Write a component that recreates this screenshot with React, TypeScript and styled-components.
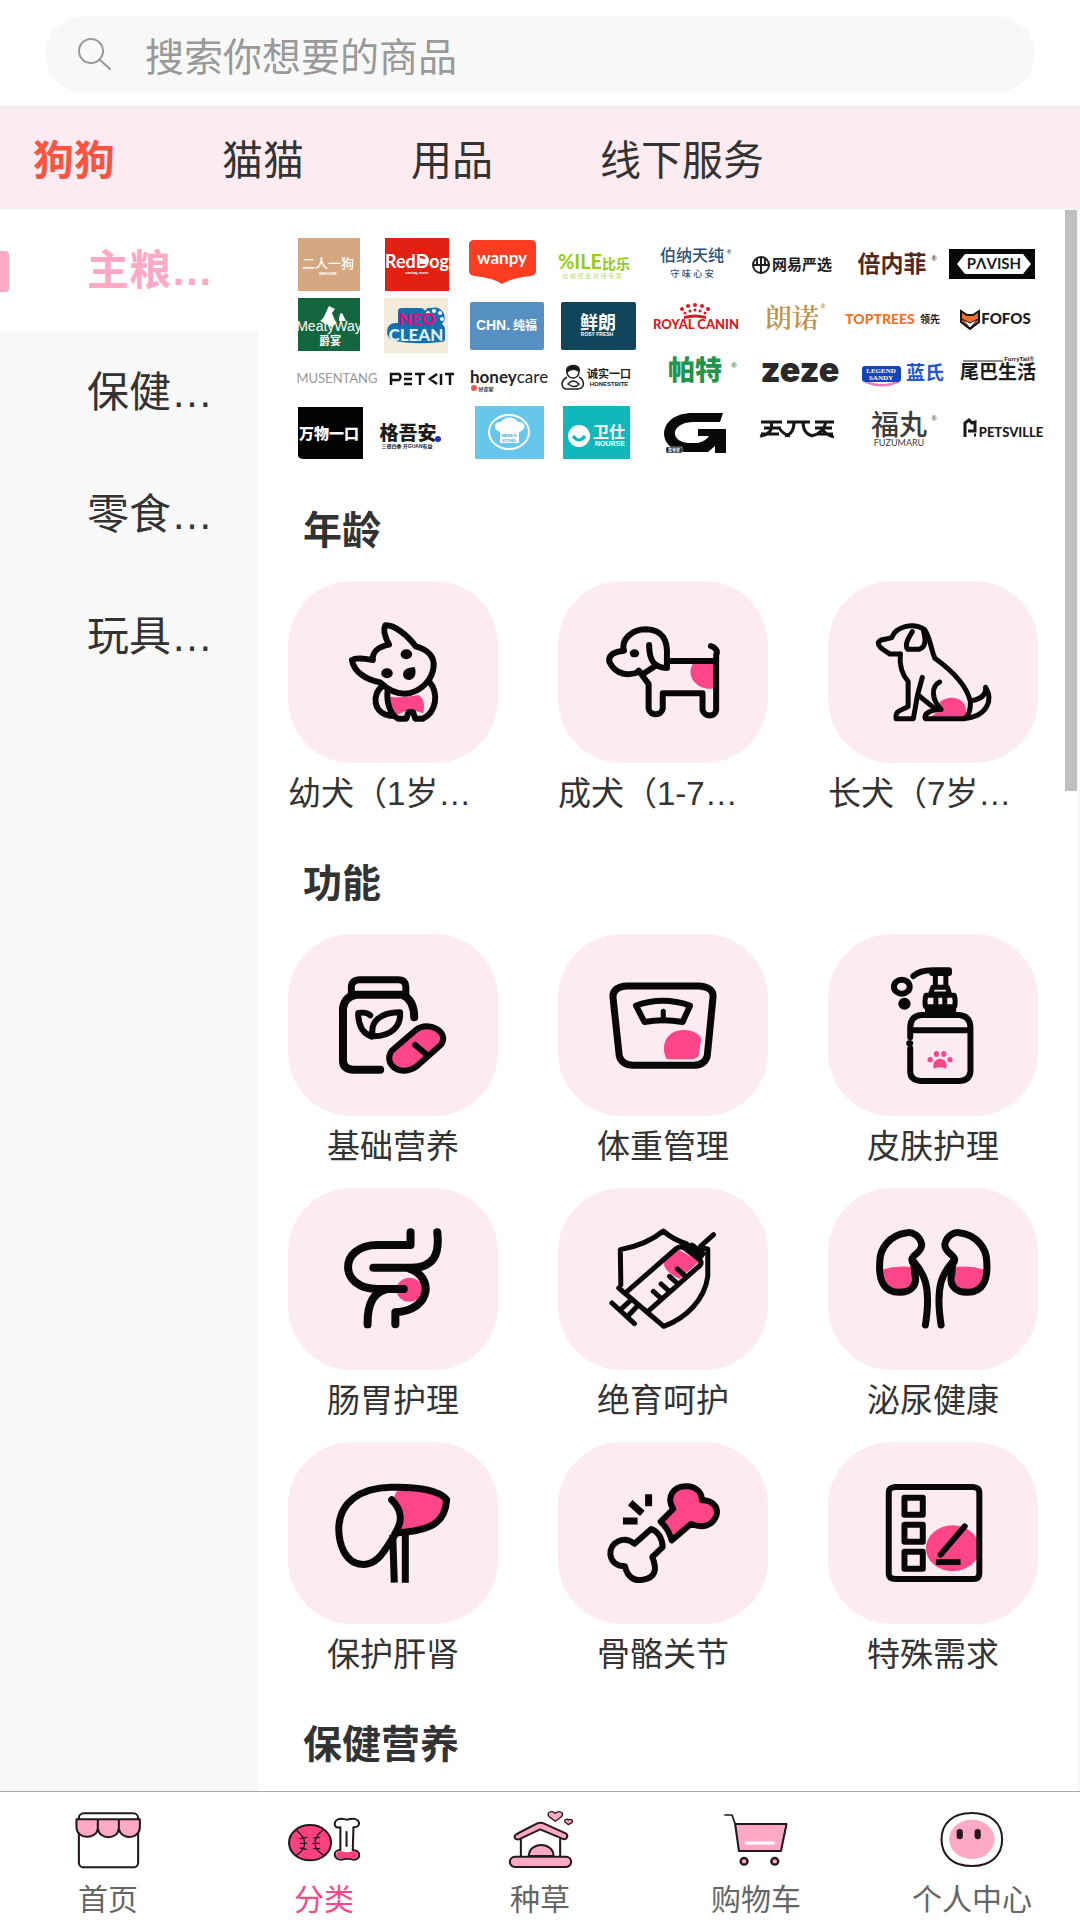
import React from "react";
import styled, { createGlobalStyle } from "styled-components";

const font = `"Liberation Sans", "Noto Sans CJK SC", sans-serif`;
const pink = "#fc4689";
const softPink = "#ffa9c7";
const tint = "#fdebf2";

const GlobalStyle = createGlobalStyle`
  * { box-sizing: border-box; }
  body { margin: 0; background: #fff; color: #333; font-family: ${font}; }
  button, input { font-family: inherit; color: inherit; }
`;

const Page = styled.div`
  display: flex;
  flex-direction: column;
  height: 100vh;
  overflow: hidden;
`;

const SearchHeader = styled.header`
  padding: 16px 45px 13px;
  border-bottom: 3px solid #eeeeee;
`;

const SearchBox = styled.label`
  display: flex;
  align-items: center;
  gap: 32px;
  height: 77px;
  padding: 0 32px;
  border-radius: 40px;
  background: #f8f8f8;
`;

const SearchInput = styled.input`
  flex: 1;
  min-width: 0;
  padding: 6px 0 0;
  border: 0;
  outline: 0;
  background: none;
  font-size: 39px;
  line-height: 56px;
  &::placeholder { color: #999; opacity: 1; }
`;

const TabBar = styled.nav`
  display: flex;
  align-items: center;
  gap: 107px;
  height: 101px;
  padding: 4px 33px 0;
  background: ${tint};
  border-bottom: 2px solid #f5f3f4;
`;

const Tab = styled.button<{ $active?: boolean }>`
  padding: 0;
  border: 0;
  background: none;
  white-space: nowrap;
  font-size: 41px;
  line-height: 56px;
  font-weight: ${(p) => (p.$active ? 700 : 400)};
  color: ${(p) => (p.$active ? "#fd5442" : "#333")};
`;

const Body = styled.div`
  flex: 1;
  min-height: 0;
  display: flex;
`;

const Sidebar = styled.aside`
  flex: none;
  width: 258px;
  background: #f8f8f8;
`;

const SideItem = styled.button<{ $active?: boolean }>`
  display: flex;
  align-items: center;
  width: 100%;
  height: 122px;
  padding: 0 40px 0 0;
  border: 0;
  text-align: left;
  background: ${(p) => (p.$active ? "#fff" : "transparent")};
  color: ${(p) => (p.$active ? softPink : "#333")};
  font-weight: ${(p) => (p.$active ? 700 : 400)};
  font-size: 42px;
  line-height: 60px;
  &::before {
    content: "";
    flex: none;
    width: 9px;
    height: 41px;
    margin-right: 78px;
    border-radius: 0 4px 4px 0;
    background: ${(p) => (p.$active ? softPink : "transparent")};
  }
`;

const Ellipsis = styled.span`
  min-width: 0;
  max-width: 100%;
  overflow: hidden;
  white-space: nowrap;
  text-overflow: ellipsis;
`;

const Content = styled.main`
  flex: 1;
  min-width: 0;
  overflow: hidden;
  padding: 0 27px 0 30px;
`;

const Rail = styled.div`
  flex: none;
  width: 15px;
  border-right: 3px solid #f8f8f8;
`;

const Thumb = styled.div`
  height: 581px;
  max-height: 60%;
  background: #c0c0c0;
`;

const BrandWall = styled.svg`
  display: block;
  width: 100%;
  overflow: visible;
`;

const SectionTitle = styled.h2`
  margin: 0;
  padding: 41px 15px 24px;
  font-size: 39px;
  line-height: 52px;
  font-weight: 700;
`;

const Grid = styled.div`
  display: grid;
  grid-template-columns: repeat(3, minmax(0, 1fr));
  gap: 18px 60px;
`;

const Card = styled.button`
  display: flex;
  flex-direction: column;
  align-items: center;
  gap: 8px;
  padding: 0;
  border: 0;
  background: none;
  font-size: 33px;
  line-height: 46px;
`;

const Tile = styled.span`
  display: block;
  width: 100%;
  height: 182px;
  border-radius: 64px;
  background: ${tint};
`;

const TileArt = styled.svg`
  display: block;
  width: 100%;
  height: 100%;
  fill: none;
  stroke: #080808;
  stroke-linecap: round;
  stroke-linejoin: round;
  & * { vector-effect: non-scaling-stroke; }
  & .fill { fill: ${pink}; stroke: none; }
  & .dot { fill: #080808; stroke: none; }
`;

const BottomNav = styled.nav`
  flex: none;
  display: grid;
  grid-template-columns: repeat(5, 1fr);
  height: 129px;
  border-top: 1px solid #aaa;
  background: #fff;
`;

const NavLink = styled.a<{ $active?: boolean }>`
  display: flex;
  flex-direction: column;
  align-items: center;
  gap: 9px;
  padding-top: 18px;
  text-decoration: none;
  font-size: 30px;
  line-height: 42px;
  white-space: nowrap;
  color: ${(p) => (p.$active ? pink : "#666")};
`;

const NavIcon = styled.svg`
  width: 72px;
  height: 60px;
  fill: none;
  stroke: #241a1c;
  stroke-width: 6;
  stroke-linecap: round;
  stroke-linejoin: round;
`;

type Art = { x: number; y: number; w: number; art: React.ReactNode };

const puppy: Art = { x: 54, y: 303, w: 6, art: (<>
  <path className="fill" d="M248 650Q272 656 302 645C312 652 317 672 312 700L296 692H280L262 704C252 690 248 670 248 650Z" />
  <path d="M247 494C240 474 235 450 240 436C256 434 280 462 298 499C322 508 334 532 332 560C330 595 312 630 285 640C262 645 245 630 230 607C205 600 180 578 176 540C184 532 200 536 216 540C214 515 228 500 247 494Z" />
  <ellipse className="dot" cx="280" cy="523" rx="11" ry="15" /><ellipse className="dot" cx="243" cy="580" rx="11" ry="15" />
  <path className="dot" d="M274 588C272 568 284 562 296 562C300 580 296 598 286 600C280 600 276 596 274 588Z" />
  <path d="M235 617C214 640 214 704 254 708M244 634C242 672 250 704 264 716H280L284 697H293L297 716H312C338 695 342 640 324 605" />
</>) };

const standingDog: Art = { x: 570, y: 303, w: 6, art: (<>
  <path className="fill" d="M830 548H870V625C843 632 822 606 823 572Q824 556 830 548Z" />
  <path d="M726 574C706 590 680 585 668 545C666 522 680 515 696 512C690 480 710 448 738 448C770 450 780 480 778 530V564C758 564 744 550 744 495M724 572L730 584L758 556M730 584L743 612V686C745 708 768 708 770 686V640H846V690C850 712 870 712 872 690V525C876 512 870 502 862 498M783 543H870" />
  <ellipse className="dot" cx="716" cy="520" rx="9" ry="12" />
</>) };

const sittingDog: Art = { x: 1086, y: 303, w: 5, art: (<>
  <path className="fill" d="M1300 690C1290 670 1306 653 1324 653C1346 656 1352 680 1350 710H1282Z" />
  <path d="M1224 522H1204C1196 512 1182 505 1182 488C1184 476 1196 480 1208 472C1215 440 1248 426 1270 448C1280 465 1282 505 1290 535C1330 580 1352 625 1358 665C1358 692 1355 710 1345 716H1272C1268 702 1280 690 1302 688C1284 660 1282 620 1299 606" />
  <path d="M1224 522C1222 560 1228 585 1239 604V680C1225 692 1214 690 1216 716H1249L1257 645L1266 592M1258 645L1290 686M1247 455C1238 478 1232 495 1238 508H1260C1275 500 1272 475 1268 450M1361 662C1380 656 1388 642 1387 622C1402 660 1390 710 1345 716" />
</>) };

const pills: Art = { x: 54, y: 282, w: 8, art: (<>
  <path d="M230 689H178Q159 686 159 662V504Q163 468 185 464H272Q295 480 295 532" />
  <path strokeWidth="7" d="M175 462V438Q177 420 190 419H265Q279 420 279 440V464" />
  <path strokeWidth="6" d="M214 590C192 578 188 545 188 519C200 516 207 519 211 526M216 589C210 545 230 517 268 517C270 560 250 590 216 589Z" />
  <path fill={pink} strokeWidth="6" d="M252 632L298 570C322 540 364 576 346 614L299 680C270 712 234 674 252 632Z" />
  <path strokeWidth="6" d="M297 615L318 643" />
</>) };

const scale: Art = { x: 570, y: 282, w: 7, art: (<>
  <path className="fill" d="M778 658C764 620 776 570 810 570C832 570 846 588 843 604L838 650L828 658Z" />
  <path d="M700 438H840Q868 442 866 472L855 648Q850 676 828 676H714Q692 675 687 648L675 472Q674 442 700 438Z" />
  <path strokeWidth="6" d="M719 497Q770 468 822 497L808 546Q770 535 735 546Z" /><path strokeWidth="5" d="M771 514V542" />
</>) };

const pump: Art = { x: 1086, y: 282, w: 5, art: (<>
  <ellipse strokeWidth="6" cx="1227" cy="440" rx="15" ry="21" /><ellipse strokeWidth="6" cx="1232" cy="491" rx="6" ry="9" />
  <path strokeWidth="6" d="M1249 408Q1262 391 1285 391H1317V399H1285" />
  <path d="M1291 400V440M1311 400V440M1286 442H1314Q1316 450 1318 462H1282Q1284 450 1286 442ZM1273 466H1327Q1330 480 1328 500H1272Q1270 480 1273 466ZM1292 468V498M1309 468V498M1276 504V522M1326 504V522M1276 512H1326" />
  <path strokeWidth="6" d="M1243 592V562Q1244 526 1265 525H1337Q1357 528 1358 562V695Q1356 723 1336 723H1264Q1243 720 1243 695V625M1246 571H1356M1241 610H1243" />
  <path className="fill" d="M1288 686C1284 665 1294 656 1300 656C1308 656 1316 668 1311 686Q1300 678 1288 686Z" />
  <ellipse className="fill" cx="1281" cy="659" rx="5" ry="8" /><ellipse className="fill" cx="1293" cy="642" rx="5" ry="9" />
  <ellipse className="fill" cx="1307" cy="642" rx="5" ry="9" /><ellipse className="fill" cx="1319" cy="659" rx="5" ry="8" />
</>) };

const stomach: Art = { x: 54, y: 55, w: 8, art: (<>
  <ellipse className="fill" cx="286" cy="360" rx="25" ry="36" />
  <path d="M288 188V226H225C150 226 150 358 225 358H275M339 188C344 254 332 294 290 294H217M285 296C332 320 330 420 259 428V464M240 360Q205 375 206 464" />
</>) };

const vaccine: Art = { x: 570, y: 55, w: 5, art: (<>
  <path className="fill" d="M798 238L840 275L802 328C780 312 764 285 776 264Z" />
  <path d="M690 346L689 240Q740 225 771 184Q790 210 815 222M848 236L856 238V320C850 390 815 445 772 470L742 430M700 368L795 238Q804 226 812 236L842 272Q846 284 836 294L744 422M686 355L742 430M710 390L692 416M722 408L704 438M673 400L716 462M752 365L766 385M767 343L781 363M783 320L797 340M798 298L812 318" />
  <path strokeWidth="6" d="M818 228L843 258M826 228L846 252" /><path d="M842 230L867 195" />
</>) };

const kidney = (<>
  <path className="fill" d="M1188 300Q1220 285 1250 293L1253 330Q1246 364 1222 366Q1190 358 1188 300Z" />
  <path d="M1250 285C1236 255 1264 258 1265 225C1262 196 1246 187 1238 189C1202 195 1185 240 1185 275C1182 330 1192 368 1222 368C1246 368 1257 345 1252 315ZM1250 276C1268 310 1284 345 1272 466" />
</>);
const kidneys: Art = { x: 1086, y: 55, w: 7, art: (<>{kidney}<g transform="translate(2574 0) scale(-1 1)">{kidney}</g></>) };

const liver: Art = { x: 54, y: 67, w: 7, art: (<>
  <path className="fill" d="M262 213C300 208 345 222 354 245C350 302 325 325 266 336C276 292 268 262 254 240Z" />
  <path d="M260 342C244 372 230 438 195 434C162 430 150 370 151 320C154 250 190 205 250 203C300 200 344 212 357 240C354 310 328 332 262 340M252 240C274 275 272 308 258 342" />
  <path strokeLinecap="butt" d="M254 345L257 489M278 340V489" />
</>) };

const bones: Art = { x: 570, y: 67, w: 6, art: (<>
  <path fill={pink} d="M787 362Q782 330 766 306L790 268C776 232 790 200 815 200C835 200 845 220 845 242C866 242 876 262 873 285C866 320 846 326 824 313Z" />
  <path d="M748 328L716 372C695 345 668 370 670 405C672 430 685 440 698 440C702 470 715 486 732 480C756 474 760 450 750 412L770 382Q768 340 748 328Z" />
  <path strokeLinecap="butt" strokeWidth="7" d="M743 224V260M708 249L731 281M694 304H722" />
</>) };

const checklist: Art = { x: 1086, y: 67, w: 6, art: (<>
  <ellipse className="fill" cx="1324" cy="386" rx="51" ry="69" />
  <path d="M1214 202H1363Q1375 204 1375 218V462Q1375 478 1363 478H1214Q1202 476 1202 462V218Q1202 204 1214 202Z" />
  <path strokeWidth="6" d="M1232 234H1267V285H1232ZM1232 315H1267V366H1232ZM1232 396H1267V447H1232Z" />
  <path d="M1347 320L1301 405" /><path strokeLinecap="butt" d="M1292 427H1339" />
</>) };

const sections: { title: string; cards: { label: string; icon: Art }[] }[] = [
  { title: "年龄", cards: [
    { label: "幼犬（1岁以下）", icon: puppy },
    { label: "成犬（1-7岁）", icon: standingDog },
    { label: "长犬（7岁以上）", icon: sittingDog },
  ] },
  { title: "功能", cards: [
    { label: "基础营养", icon: pills },
    { label: "体重管理", icon: scale },
    { label: "皮肤护理", icon: pump },
    { label: "肠胃护理", icon: stomach },
    { label: "绝育呵护", icon: vaccine },
    { label: "泌尿健康", icon: kidneys },
    { label: "保护肝肾", icon: liver },
    { label: "骨骼关节", icon: bones },
    { label: "特殊需求", icon: checklist },
  ] },
  { title: "保健营养", cards: [] },
];

const navItems = [
  { label: "首页", x: 209, art: (<>
    <rect x="229" y="100" width="172" height="162" rx="14" fill="#fff" />
    <path fill={softPink} d="M222 118H406V142C404 180 350 180 345 146C342 180 288 180 284 146C280 180 222 178 222 142ZM284 118V148M345 118V148" />
  </>) },
  { label: "分类", x: 836, active: true, art: (<>
    <ellipse cx="900" cy="188" rx="61" ry="53" fill="#ff4081" />
    <path strokeWidth="4" d="M862 152C892 176 892 206 860 226M938 150C904 176 908 206 940 226M872 176L890 172M872 190H890M872 204L890 208M928 172L912 174M928 190H908M928 206L910 206" />
    <path fill="#fff" d="M988 142C966 148 966 118 988 116C1000 116 1004 119 1008 119C1014 116 1020 116 1028 116C1048 122 1046 142 1026 142L1024 210C1048 212 1048 236 1028 239Q1008 234 990 239C966 236 966 210 988 210Z" />
    <path fill="#ff4081" stroke="none" d="M988 213Q1006 220 1026 213C1044 216 1042 234 1028 236Q1008 232 990 236C970 234 972 216 988 213Z" />
    <path d="M1006 156V198" />
  </>) },
  { label: "种草", x: 1463, art: (<>
    <path d="M1512 178V228M1626 178V228" />
    <path fill={softPink} d="M1535 228C1536 184 1606 184 1607 228Z" />
    <path fill={softPink} d="M1500 162L1558 131Q1568 126 1578 130L1642 160C1652 168 1644 182 1632 176L1568 148L1506 178C1492 180 1490 168 1500 162Z" />
    <rect x="1480" y="230" width="178" height="31" rx="15" fill={softPink} />
    <path strokeWidth="4" fill={softPink} d="M1612 124L1594 110C1584 96 1602 90 1612 100C1622 90 1640 96 1630 110ZM1650 134L1640 126C1636 118 1646 116 1650 120C1656 116 1666 120 1660 128Z" />
  </>) },
  { label: "购物车", x: 523, art: (<>
    <path fill={softPink} d="M567 132H716L700 213H578Z" />
    <path d="M537 105H558L567 132" strokeWidth="5" /><path d="M600 189H678" stroke="#fff" strokeWidth="9" />
    <circle cx="593" cy="244" r="10" fill={softPink} strokeWidth="7" /><circle cx="682" cy="244" r="10" fill={softPink} strokeWidth="7" />
  </>) },
  { label: "个人中心", x: 1150, art: (<>
    <path fill="#fff" d="M1254 99C1310 99 1342 130 1342 178C1342 226 1310 258 1254 258C1198 258 1166 226 1166 178C1166 130 1198 99 1254 99Z" />
    <ellipse cx="1254" cy="178" rx="66" ry="59" fill={softPink} stroke="none" />
    <path strokeWidth="18" d="M1219 156V169M1271 156V169" />
  </>) },
];

type WordProps = { x: number; y: number; s: number; c?: string; w?: number; f?: string; children: string };
const Word = ({ x, y, s, c = "#1c1c1c", w = 700, f, children }: WordProps) => (
  <text x={x} y={y} fontSize={s} fill={c} fontWeight={w} fontFamily={f} textAnchor="middle">{children}</text>
);

const round = `Lato, "Noto Sans CJK SC", sans-serif`;
const serif = `"Liberation Serif", "Noto Sans CJK SC", serif`;

const Brands = () => (
  <BrandWall viewBox="288 210 750 254" fontFamily={font} role="img" aria-label="品牌">
    <rect x="298" y="238" width="62" height="53" fill="#d4a780" />
    <Word x={328} y={268} s={13} c="#fff" w={500}>二人一狗</Word><Word x={328} y={275} s={4} c="#fff">ERHOME</Word>
    <rect x="385" y="238" width="64" height="53" fill="#e22113" />
    <Word x={417} y={268} s={18} c="#fff" f={round}>RedDog</Word>
    <path d="M420 258q6 2 9 0l-2 6h-7z" fill="#fff" /><Word x={417} y={274} s={4} c="#fff">caring more</Word>
    <path d="M474 240h57q5 0 5 5v26q0 4-5 5-20 2-29 8-8-6-28-8-5-1-5-5v-26q0-5 5-5z" fill="#fe3c22" />
    <Word x={502} y={264} s={17} c="#fff" f={round}>wanpy</Word>
    <Word x={580} y={269} s={20} c="#95ce10" f={round}>%ILE</Word><Word x={616} y={269} s={14} c="#95ce10">比乐</Word>
    <Word x={592} y={278} s={6} c="#b6dc5d" w={400}>比 诚 很 会 对 待 专 家</Word>
    <Word x={692} y={261} s={16} c="#315079" w={500}>伯纳天纯</Word><Word x={729} y={254} s={6} c="#315079">®</Word>
    <Word x={692} y={277} s={9} c="#315079" w={500}>守  味  心  安</Word>
    <g fill="none" stroke="#222" strokeWidth="2"><circle cx="761" cy="265" r="8" /><path d="M753 265h16M761 257v16M757 259v6M765 259v6" /></g>
    <Word x={802} y={270} s={15}>网易严选</Word>
    <Word x={892} y={272} s={23} c="#54291d">倍内菲</Word><Word x={934} y={261} s={7} c="#54291d">®</Word>
    <rect x="949" y="249" width="86" height="30" fill="#080808" /><path d="M957 264l8-10h58l8 10-8 10h-58z" fill="#fff" />
    <Word x={994} y={269} s={15} f={round}>PΛVISH</Word>

    <rect x="298" y="298" width="62" height="53" fill="#13663e" />
    <path d="M320 321c5-3 6-10 9-15l6 3-3 4 4 10-4 4zM339 321q0-8 3-8l4 8z" fill="#fff" />
    <Word x={329} y={331} s={14} c="#fff" w={400}>MeatyWay</Word><Word x={330} y={345} s={11} c="#fff">爵宴</Word>
    <rect x="384" y="298" width="64" height="55" fill="#f3ead9" />
    <path d="M387 332q0-9 9-9h2v-12q0-3 4-3h18q4 0 5 3 2-4 6-3 8-2 12 4 4 7-1 12 3 2 3 6v9q0 3-4 3-26 3-46-1-8-2-8-9z" fill="#1770ae" />
    <g fill="#fff"><circle cx="428" cy="313" r="2" /><circle cx="434" cy="311" r="2" /><circle cx="440" cy="313" r="2" /><circle cx="442" cy="319" r="2" /></g>
    <Word x={417} y={325} s={17} c="#e9077c" w={900} f={round}>NEO</Word>
    <Word x={416} y={341} s={17} c="#d8f2ff" w={900} f={round}>CLEAN</Word>
    <rect x="470" y="302" width="74" height="48" rx="2" fill="#568fc2" />
    <Word x={493} y={330} s={14} c="#fff">CHN.</Word><Word x={525} y={330} s={12} c="#fff">纯福</Word>
    <rect x="561" y="302" width="75" height="48" rx="2" fill="#10445b" />
    <Word x={598} y={329} s={18} c="#fff">鲜朗</Word><Word x={597} y={336} s={5} c="#fff">ROSY FRESH</Word>
    <g fill="#d91920"><circle cx="682" cy="309" r="2" /><circle cx="688" cy="306" r="2" /><circle cx="695" cy="305" r="2" /><circle cx="702" cy="306" r="2" /><circle cx="708" cy="309" r="2" /><circle cx="685" cy="313" r="1.5" /><circle cx="690" cy="311" r="1.5" /><circle cx="695" cy="310" r="1.5" /><circle cx="700" cy="311" r="1.5" /><circle cx="705" cy="313" r="1.5" /><path d="M684 316q11-3 22 0v3q-11-3-22 0z" /></g>
    <Word x={696} y={329} s={13} c="#d91920" w={900} f={round}>ROYAL CANIN</Word>
    <Word x={792} y={328} s={27} c="#bd9550" w={600} f={`"Noto Serif CJK SC", ${serif}`}>朗诺</Word><Word x={823} y={309} s={7} c="#bd9550">®</Word>
    <Word x={880} y={324} s={14} c="#f37021" w={900} f={round}>TOPTREES</Word><Word x={930} y={323} s={10}>领先</Word>
    <path d="M961 311l6 4h6l6-4v11l-9 7-9-7z" fill="#f06c2b" stroke="#151515" strokeWidth="2" /><path d="M962 319l8 4 8-4-8 9z" fill="#fff" stroke="#151515" />
    <Word x={1006} y={324} s={15} w={900} f={round}>FOFOS</Word>

    <Word x={337} y={383} s={13} c="#999" w={400} f={round}>MUSENTANG</Word>
    <g fill="none" stroke="#151515" strokeWidth="2.5"><path d="M391 385v-11h8q3 3 0 6h-8M404 374h8M404 379h8M404 384h8M415 374h10M420 374v11M437 374l-7 5 7 5M441 374v11M445 374h9M450 374v11" /></g>
    <text x="470" y="383" fontSize="17" fontFamily={round} fontWeight="700" fill="#252525">honey<tspan fontWeight="400">care</tspan></text>
    <circle cx="474" cy="388" r="3" fill="#ee5452" /><Word x={486} y={391} s={5}>好命家</Word>
    <g fill="none" stroke="#222" strokeWidth="1.5"><circle cx="573" cy="372" r="6" /><path d="M567 372c-3-8 14-9 12-1-4-2-7-3-12 1z" fill="#151515" /><path d="M567 377c-8 5-5 12 0 12h11c8-1 6-10 1-12M568 384q5-6 11 0-4 5-11 0z" /></g>
    <Word x={609} y={378} s={11}>诚实一口</Word><Word x={609} y={386} s={6}>HONESTBITE</Word>
    <Word x={695} y={380} s={27} c="#22944c" w={900}>帕特</Word><Word x={734} y={368} s={8} c="#22944c">®</Word>
    <Word x={800} y={382} s={34} c="#292929" w={900} f={`Inter, sans-serif`}>zeze</Word>
    <path d="M865 380q17 8 34 0v3q-17 7-34 0z" fill="#e879bc" /><rect x="862" y="366" width="39" height="16" rx="3" fill="#1444bc" />
    <Word x={881} y={373} s={7} c="#fff" f={serif}>LEGEND</Word><Word x={881} y={380} s={7} c="#fff" f={serif}>SANDY</Word>
    <Word x={925} y={380} s={19} c="#2356d4">蓝氏</Word>
    <path d="M963 361h40" stroke="#222" /><Word x={1019} y={361} s={6}>FurryTail®</Word><Word x={998} y={379} s={19}>尾巴生活</Word>

    <path d="M298 407h65v52h-59q-6 0-6-4z" fill="#020202" /><Word x={329} y={439} s={15} c="#fff" w={900}>万物一口</Word>
    <Word x={408} y={440} s={19} w={900}>格吾安</Word><circle cx="438" cy="439" r="3" fill="#212cc1" /><Word x={407} y={448} s={5}>三餐四季 开GUAN有益</Word>
    <rect x="475" y="406" width="69" height="53" fill="#66c6ec" /><ellipse cx="509" cy="432" rx="20" ry="17" fill="none" stroke="#fff" strokeWidth="2" />
    <path d="M500 432c-8-2-6-11 1-10 3-6 14-6 17 0 8-1 9 8 1 10v11h-19z" fill="#fff" /><Word x={509} y={437} s={4} c="#4ba8ca">MEEE'S</Word><Word x={509} y={442} s={3} c="#4ba8ca">KITCHEN</Word>
    <rect x="563" y="406" width="67" height="53" fill="#12b7bc" /><circle cx="579" cy="436" r="11" fill="#fff" /><path d="M573 436q6 8 12 0" fill="none" stroke="#12b7bc" strokeWidth="3" />
    <Word x={609} y={438} s={16} c="#fff">卫仕</Word><Word x={610} y={446} s={7} c="#fff">NOURSE</Word>
    <path d="M723 413h-30c-37 0-37 37-8 39h23l7-6v7h11v-24h-28v7h11q-3 5-11 7h-10c-19-2-17-20 4-21h28z" fill="#080808" />
    <rect x="666" y="447" width="16" height="6" fill="#222" stroke="#fff" strokeWidth=".5" /><Word x={674} y={452} s={4} c="#fff">高爷家</Word>
    <path d="M761 422h21M764 428h17M761 434h18M771 422q3 12-11 14M779 428q5 7 11 8M787 422h23M794 422q0 12-9 14M803 422q0 12 10 14M815 422h19M815 428h17M818 434h15M826 422q-3 12-15 14M822 428q3 7 12 9" fill="none" stroke="#151515" strokeWidth="3" />
    <Word x={899} y={435} s={28} c="#3d3d3d" w={500}>福丸</Word><Word x={899} y={446} s={9} c="#3d3d3d" w={400} f={round}>FUZUMARU</Word><Word x={934} y={421} s={7} c="#555">®</Word>
    <path d="M965 437v-14l4-3 3 3 3-1v9h-7m6 4h2" fill="none" stroke="#191919" strokeWidth="3" />
    <Word x={1011} y={437} s={13} w={900} f={round}>PETSVILLE</Word>
  </BrandWall>
);

export default function App() {
  return (
    <Page>
      <GlobalStyle />
      <SearchHeader>
        <SearchBox>
          <svg width="36" height="36" viewBox="0 0 36 36" fill="none" stroke="#999" strokeWidth="2" strokeLinecap="round" aria-hidden="true">
            <circle cx="14" cy="14" r="12" /><path d="M23 23L33 32" />
          </svg>
          <SearchInput type="search" placeholder="搜索你想要的商品" aria-label="搜索" />
        </SearchBox>
      </SearchHeader>
      <TabBar>
        {["狗狗", "猫猫", "用品", "线下服务"].map((t, i) => <Tab key={t} $active={i === 0}>{t}</Tab>)}
      </TabBar>
      <Body>
        <Sidebar>
          {["主粮专区", "保健专区", "零食专区", "玩具专区"].map((t, i) => (
            <SideItem key={t} $active={i === 0}><Ellipsis>{t}</Ellipsis></SideItem>
          ))}
        </Sidebar>
        <Content>
          <Brands />
          {sections.map((s) => (
            <section key={s.title}>
              <SectionTitle>{s.title}</SectionTitle>
              <Grid>
                {s.cards.map(({ label, icon }) => (
                  <Card key={label}>
                    <Tile>
                      <TileArt viewBox={`${icon.x} ${icon.y} 401 546`} preserveAspectRatio="none" strokeWidth={icon.w} aria-hidden="true">{icon.art}</TileArt>
                    </Tile>
                    <Ellipsis>{label}</Ellipsis>
                  </Card>
                ))}
              </Grid>
            </section>
          ))}
        </Content>
        <Rail><Thumb /></Rail>
      </Body>
      <BottomNav>
        {navItems.map((n) => (
          <NavLink key={n.label} href="#" $active={n.active}>
            <NavIcon viewBox={`${n.x} 90 209 180`} preserveAspectRatio="none" aria-hidden="true">{n.art}</NavIcon>
            {n.label}
          </NavLink>
        ))}
      </BottomNav>
    </Page>
  );
}
